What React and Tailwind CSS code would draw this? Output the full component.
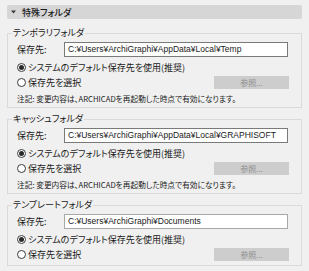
import React from "react";

const jp = "font-['Noto_Sans_CJK_JP',sans-serif] [font-feature-settings:'palt']";

function Radio({ checked, label }) {
  return (
    <div className="flex items-center">
      <span className="ml-[9px] flex h-[9px] w-[9px] items-center justify-center rounded-full border border-[#3c3c3c] bg-white">
        {checked && <span className="h-[5px] w-[5px] rounded-full bg-[#2a2a2a]" />}
      </span>
      <span className={`ml-[2px] text-[9px] leading-none text-[#1a1a1a] ${jp}`}>{label}</span>
    </div>
  );
}

function Group({ title, path, note, light }) {
  return (
    <fieldset className="mt-[5px] border border-[#dadada] pb-0">
      <legend className={`ml-[4px] px-[1px] text-[9px] leading-[12px] text-[#1a1a1a] ${jp}`}>{title}</legend>
      <div className="mt-[3px] flex h-[15px] items-center">
        <span className={`w-[56px] pl-[9px] text-[9px] leading-none text-[#1a1a1a] ${jp}`}>保存先:</span>
        <div
          className={`flex h-[15px] w-[224px] items-center border bg-white pl-[3px] font-['Liberation_Sans',sans-serif] text-[8.5px] text-[#1a1a1a] ${
            light ? "border-[#a8a8a8]" : "border-[#7a7a7a]"
          }`}
        >
          {path}
        </div>
      </div>
      <div className="mt-[3px] flex h-[15px] items-center">
        <Radio checked label="システムのデフォルト保存先を使用(推奨)" />
      </div>
      <div className="flex h-[15px] items-center justify-between pr-[12px]">
        <Radio label="保存先を選択" />
        <div className={`flex h-[13px] w-[75px] items-center justify-center bg-[#cdcdcd] text-[8px] leading-none text-[#8e8e8e] ${jp}`}>
          参照...
        </div>
      </div>
      {note ? (
        <div className={`mt-[2px] mb-[1px] flex h-[14px] items-center pl-[9px] text-[7.7px] leading-none text-[#1a1a1a] ${jp}`}>
          注記: 変更内容は、ARCHICADを再起動した時点で有効になります。
        </div>
      ) : (
        <div className="h-[3px]" />
      )}
    </fieldset>
  );
}

export default function App() {
  return (
    <div className="h-[271px] w-[309px] overflow-hidden bg-[#f0f0f0] px-[7px] pt-[5px]">
      <div className="flex h-[14px] items-center rounded-[2px] bg-[#d6d6d6] pl-[4px]">
        <svg width="5" height="4" viewBox="0 0 5 4" className="mr-[6px]">
          <path d="M0 0.5 L5 0.5 L2.5 3.5 Z" fill="#3a3a3a" />
        </svg>
        <span className={`text-[9px] font-medium leading-none text-[#1a1a1a] ${jp}`}>特殊フォルダ</span>
      </div>
      <div className="h-[3px]" />
      <Group title="テンポラリフォルダ" path="C:¥Users¥ArchiGraphi¥AppData¥Local¥Temp" note />
      <Group title="キャッシュフォルダ" path="C:¥Users¥ArchiGraphi¥AppData¥Local¥GRAPHISOFT" note />
      <Group title="テンプレートフォルダ" path="C:¥Users¥ArchiGraphi¥Documents" light />
    </div>
  );
}
